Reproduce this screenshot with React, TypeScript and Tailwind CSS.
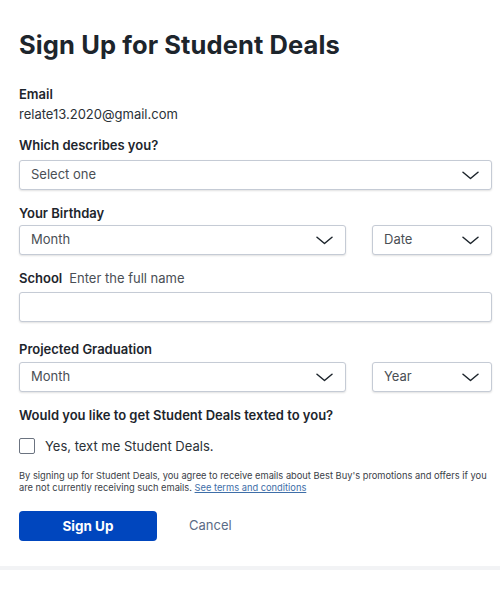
import React from "react";

function Chevron() {
  return (
    <svg width="17" height="9" viewBox="0 0 17 9" fill="none" className="shrink-0">
      <path d="M1 1.2l7.5 6.3L16 1.2" stroke="#1d252c" strokeWidth="1.5" strokeLinecap="round" strokeLinejoin="round" />
    </svg>
  );
}

function Select({ label, className }: { label: string; className: string }) {
  return (
    <div
      className={`flex h-[30px] items-center justify-between rounded-[3px] border border-[#c5cbd5] bg-white pl-[11px] pr-[12px] shadow-[0_1px_2px_rgba(0,0,0,0.12)] ${className}`}
    >
      <span className="text-[13px] text-[#4a4f55]">{label}</span>
      <Chevron />
    </div>
  );
}

export default function App() {
  return (
    <div className="min-h-[600px] w-[500px] bg-white font-['Inter',sans-serif] text-[#1d252c]">
      <div className="pl-[19px] pr-[8px] pt-[31px]">
        <h1 className="text-[25.5px] font-bold leading-[28px] tracking-[0.1px]">Sign Up for Student Deals</h1>

        <div className="mt-[27px] text-[13px] font-semibold leading-[16px]">Email</div>
        <div className="mt-[4px] text-[13px] leading-[16px] text-[#2b3137]">relate13.2020@gmail.com</div>

        <div className="mt-[15px] text-[13px] font-semibold leading-[16px]">Which describes you?</div>
        <Select label="Select one" className="mt-[7px] w-full" />

        <div className="mt-[15px] text-[13px] font-semibold leading-[16px]">Your Birthday</div>
        <div className="mt-[4px] flex gap-[26px]">
          <Select label="Month" className="w-[327px]" />
          <Select label="Date" className="flex-1" />
        </div>

        <div className="mt-[15px] flex gap-[7px] text-[13px] leading-[16px]">
          <span className="font-semibold">School</span>
          <span className="text-[#4a4f55]">Enter the full name</span>
        </div>
        <div className="mt-[6px] h-[30px] w-full rounded-[3px] border border-[#c5cbd5] bg-white shadow-[0_1px_2px_rgba(0,0,0,0.12)]" />

        <div className="mt-[19px] text-[13px] font-semibold leading-[16px]">Projected Graduation</div>
        <div className="mt-[5px] flex gap-[26px]">
          <Select label="Month" className="w-[327px]" />
          <Select label="Year" className="flex-1" />
        </div>

        <div className="mt-[15px] text-[13px] font-semibold leading-[16px]">Would you like to get Student Deals texted to you?</div>
        <label className="mt-[15px] flex items-center gap-[10px]">
          <span className="h-[16px] w-[16px] rounded-[2px] border border-[#6b7380] bg-white" />
          <span className="text-[13px] leading-[16px] text-[#2b3137]">Yes, text me Student Deals.</span>
        </label>

        <p className="mt-[16px] text-[9.3px] leading-[12px] text-[#3b4148]">
          By signing up for Student Deals, you agree to receive emails about Best Buy's promotions and offers if you are not currently receiving such emails.{" "}
          <span className="text-[#3e6ea8] underline">See terms and conditions</span>
        </p>

        <div className="mt-[17px] flex items-center">
          <button className="h-[30px] w-[138px] rounded-[4px] bg-[#0046be] text-[13.5px] font-bold text-white">Sign Up</button>
          <span className="ml-[32px] text-[13px] text-[#5b6b86]">Cancel</span>
        </div>
      </div>
      <div className="mt-[25px] h-[4px] w-full bg-[#f2f3f5]" />
    </div>
  );
}
